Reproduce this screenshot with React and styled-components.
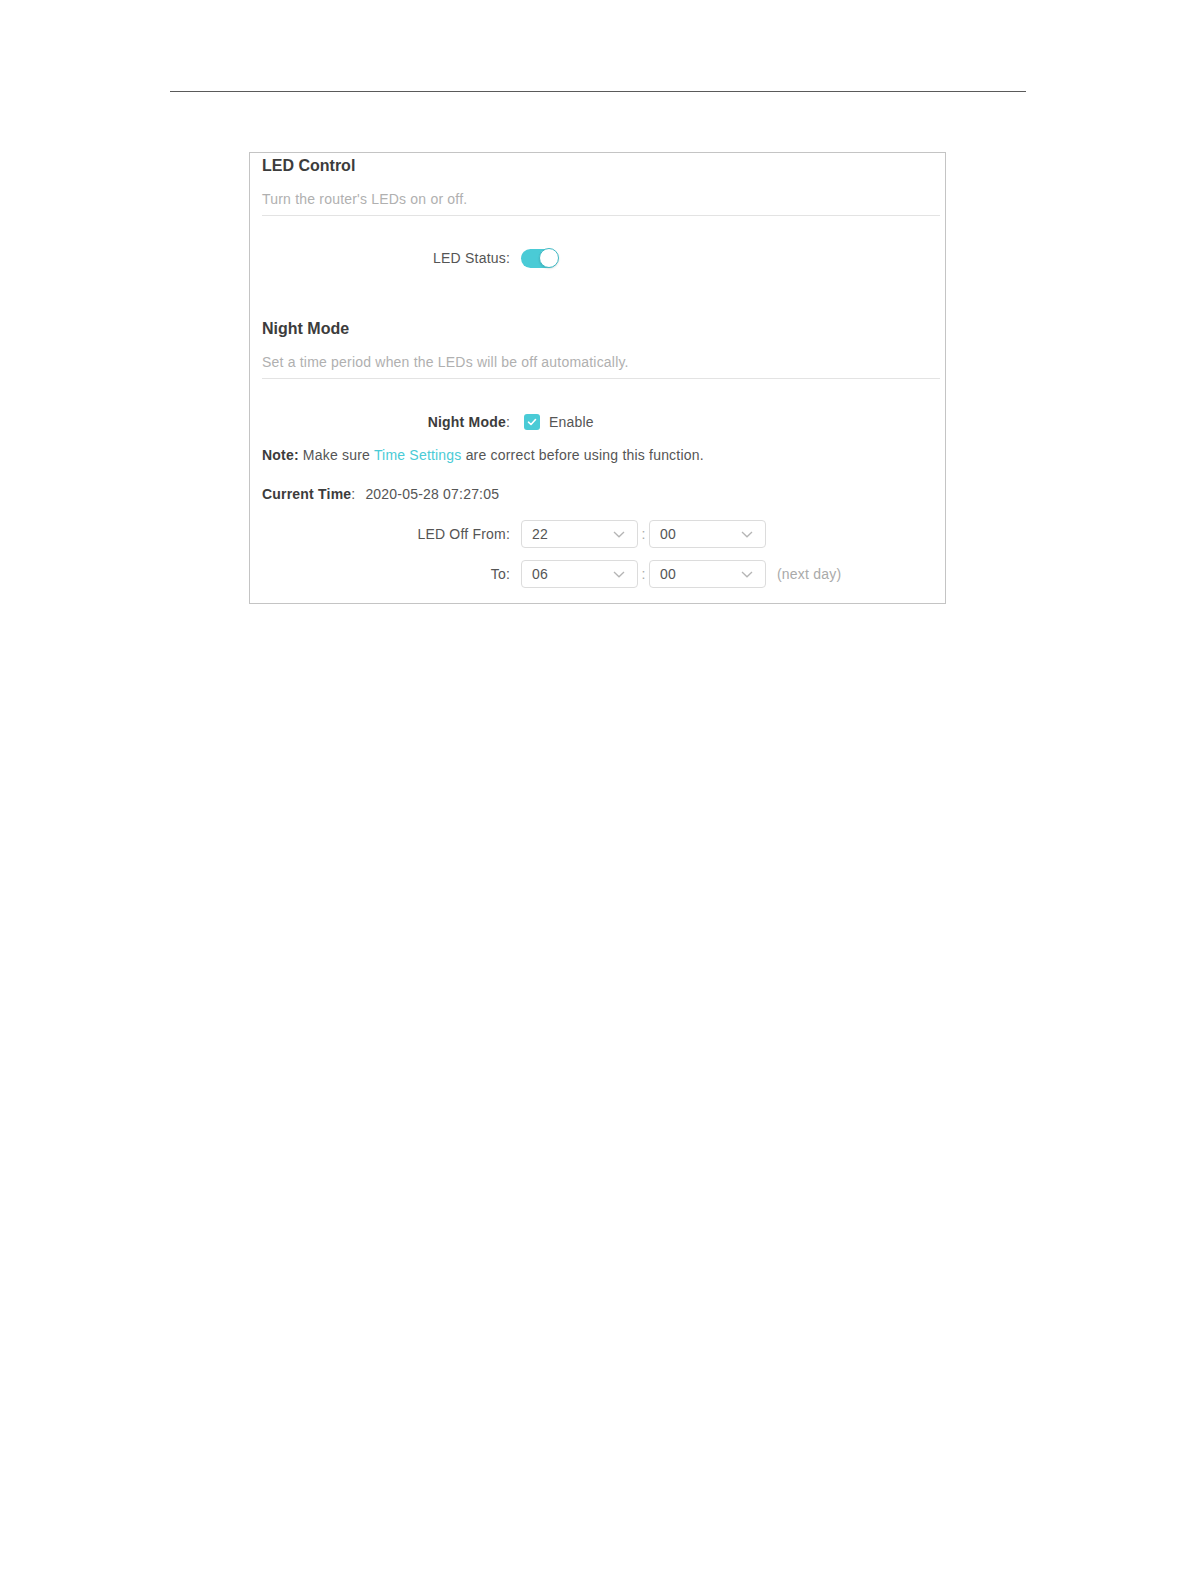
import React, {useState} from 'react';
import styled, {createGlobalStyle} from "styled-components";

const TEAL = '#4acbd6'

export default function App() {
  const [ledOn, setLedOn] = useState(true)
  const [nightOn, setNightOn] = useState(true)

  return (
    <Page>
      <GlobalStyle/>
      <TopRule/>
      <Card>
        <SectionHead $mt={1}>
          <Title>LED Control</Title>
          <Subtitle>Turn the router's LEDs on or off.</Subtitle>
        </SectionHead>

        <Row $mt={28}>
          <Label>LED Status:</Label>
          <Toggle $on={ledOn} onClick={() => setLedOn(!ledOn)}>
            <Knob $on={ledOn}/>
          </Toggle>
        </Row>

        <SectionHead $mt={45}>
          <Title>Night Mode</Title>
          <Subtitle>Set a time period when the LEDs will be off automatically.</Subtitle>
        </SectionHead>

        <Row $mt={29}>
          <Label><b>Night Mode</b>:</Label>
          <CheckWrap onClick={() => setNightOn(!nightOn)}>
            <Check $on={nightOn}>
              {nightOn && (
                <svg width="10" height="8" viewBox="0 0 10 8">
                  <polyline points="1.5,4.2 4,6.5 8.5,1.5" fill="none" stroke="#fff" strokeWidth="1.6"
                            strokeLinecap="round" strokeLinejoin="round"/>
                </svg>
              )}
            </Check>
            Enable
          </CheckWrap>
        </Row>

        <TextLine $mt={9}>
          <b>Note:</b> Make sure <Link>Time Settings</Link> are correct before using this function.
        </TextLine>

        <TextLine $mt={19}>
          <b>Current Time</b>:<Value>2020-05-28 07:27:05</Value>
        </TextLine>

        <Row $mt={16}>
          <Label>LED Off From:</Label>
          <Select value="22"/>
          <Colon>:</Colon>
          <Select value="00"/>
        </Row>

        <Row $mt={12}>
          <Label>To:</Label>
          <Select value="06"/>
          <Colon>:</Colon>
          <Select value="00"/>
          <Hint>(next day)</Hint>
        </Row>
      </Card>
    </Page>
  );
}

function Select({value}) {
  return (
    <SelectBox>
      <span>{value}</span>
      <svg width="12" height="7" viewBox="0 0 12 7">
        <polyline points="1,1 6,5.8 11,1" fill="none" stroke="#b5b5b5" strokeWidth="1.3"/>
      </svg>
    </SelectBox>
  )
}

// ---- Styled

const GlobalStyle = createGlobalStyle`
  body {
    margin: 0;
    background: #fff;
    font-family: "Liberation Sans", Arial, sans-serif;
  }
`;

const Page = styled.div`
  width: 1196px;
  min-height: 1582px;
  padding-top: 91px;
  box-sizing: border-box;
`;

const TopRule = styled.div`
  margin-left: 170px;
  width: 856px;
  height: 1px;
  background: #5a5a5a;
`;

const Card = styled.div`
  margin: 60px 0 0 249px;
  width: 697px;
  box-sizing: border-box;
  border: 1px solid #c4c4c4;
  padding: 0 5px 15px 12px;
  font-size: 14px;
  letter-spacing: 0.2px;
  color: #555;
`;

const SectionHead = styled.div`
  margin-top: ${p => p.$mt || 0}px;
  padding-bottom: 6px;
  border-bottom: 1px solid #e3e3e3;
`;

const Title = styled.div`
  font-size: 16px;
  font-weight: bold;
  line-height: 24px;
  letter-spacing: 0;
  color: #3c3c3c;
`;

const Subtitle = styled.div`
  margin-top: 11px;
  line-height: 20px;
  color: #b0b0b0;
`;

const Row = styled.div`
  display: flex;
  align-items: center;
  height: 28px;
  margin-top: ${p => p.$mt || 0}px;
`;

const Label = styled.div`
  width: 248px;
  margin-right: 11px;
  text-align: right;
  color: #555;

  b {
    color: #3c3c3c;
  }
`;

const Toggle = styled.div`
  position: relative;
  width: 37px;
  height: 19px;
  border-radius: 10px;
  background: ${p => p.$on ? TEAL : '#ccc'};
  cursor: pointer;
`;

const Knob = styled.div`
  position: absolute;
  top: -0.5px;
  ${p => p.$on ? 'right: -1px;' : 'left: -1px;'}
  width: 20px;
  height: 20px;
  box-sizing: border-box;
  border-radius: 50%;
  background: #fff;
  border: 1px solid ${p => p.$on ? '#3fb9c4' : '#bbb'};
  box-shadow: 0 1px 2px rgba(0, 0, 0, .12);
`;

const CheckWrap = styled.label`
  display: flex;
  align-items: center;
  gap: 9px;
  margin-left: 3px;
  color: #555;
  cursor: pointer;
`;

const Check = styled.span`
  display: flex;
  align-items: center;
  justify-content: center;
  width: 16px;
  height: 16px;
  box-sizing: border-box;
  border-radius: 3px;
  background: ${p => p.$on ? TEAL : '#fff'};
  border: ${p => p.$on ? 'none' : '1px solid #bbb'};
`;

const TextLine = styled.div`
  margin-top: ${p => p.$mt || 0}px;
  line-height: 20px;
  color: #555;

  b {
    color: #3c3c3c;
  }
`;

const Link = styled.span`
  color: ${TEAL};
`;

const Value = styled.span`
  margin-left: 10px;
`;

const SelectBox = styled.div`
  display: flex;
  align-items: center;
  justify-content: space-between;
  width: 117px;
  height: 28px;
  box-sizing: border-box;
  padding: 0 12px 0 10px;
  border: 1px solid #dcdcdc;
  border-radius: 4px;
  color: #555;
`;

const Colon = styled.span`
  width: 11px;
  text-align: center;
  color: #aaa;
`;

const Hint = styled.span`
  margin-left: 11px;
  color: #aaa;
`;
